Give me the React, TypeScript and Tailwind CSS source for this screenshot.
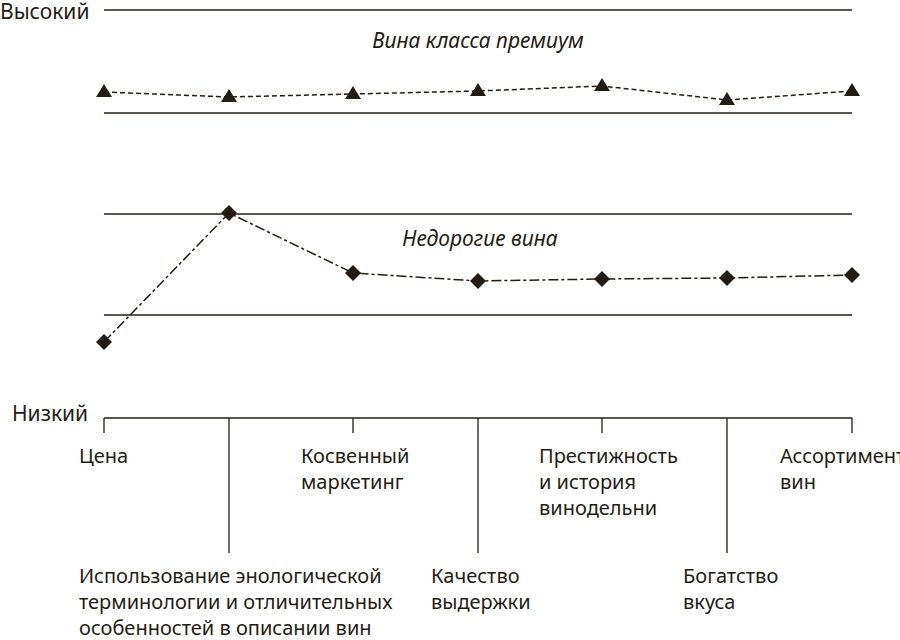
export default function App() {
  const xs = [104, 229, 353, 478, 602, 727, 852];
  const tri = [92, 97, 94, 91, 86, 100, 91];
  const dia = [342, 213, 273, 281, 279, 278, 275];
  const c = "#231c14";
  const lab = (x: number, y: number, lines: string[]) =>
    lines.map((l, i) => (
      <text key={l} x={x} y={y + i * 26} fontSize={20} fill={c}>{l}</text>
    ));
  return (
    <div className="w-[900px] h-[640px] bg-white overflow-hidden font-['Liberation_Sans_Narrow','Roboto_Condensed',sans-serif]">
      <svg width="900" height="640">
        {[10, 113, 214, 315].map((y) => (
          <line key={y} x1={104} x2={852} y1={y} y2={y} stroke={c} strokeWidth={1.3} />
        ))}
        <line x1={104} x2={852} y1={418} y2={418} stroke={c} strokeWidth={1.3} />
        {[104, 353, 602, 852].map((x) => (
          <line key={x} x1={x} x2={x} y1={418} y2={433} stroke={c} strokeWidth={1.3} />
        ))}
        {[229, 478, 727].map((x) => (
          <line key={x} x1={x} x2={x} y1={418} y2={553} stroke={c} strokeWidth={1.3} />
        ))}
        <text x={0} y={19} fontSize={21} fill={c}>Высокий</text>
        <text x={12} y={421} fontSize={21} fill={c}>Низкий</text>
        <text x={478} y={48} fontSize={21} fontStyle="italic" textAnchor="middle" fill={c}>Вина класса премиум</text>
        <text x={480} y={246} fontSize={21} fontStyle="italic" textAnchor="middle" fill={c}>Недорогие вина</text>
        <polyline points={xs.map((x, i) => `${x},${tri[i]}`).join(" ")} fill="none" stroke={c} strokeWidth={1.5} strokeDasharray="5 3" />
        <polyline points={xs.map((x, i) => `${x},${dia[i]}`).join(" ")} fill="none" stroke={c} strokeWidth={1.5} strokeDasharray="10 3 3 3" />
        {xs.map((x, i) => (
          <polygon key={"t" + x} points={`${x},${tri[i] - 8} ${x - 8},${tri[i] + 5} ${x + 8},${tri[i] + 5}`} fill={c} />
        ))}
        {xs.map((x, i) => (
          <polygon key={"d" + x} points={`${x},${dia[i] - 8} ${x + 8},${dia[i]} ${x},${dia[i] + 8} ${x - 8},${dia[i]}`} fill={c} />
        ))}
        {lab(79, 463, ["Цена"])}
        {lab(301, 463, ["Косвенный", "маркетинг"])}
        {lab(539, 463, ["Престижность", "и история", "винодельни"])}
        {lab(780, 463, ["Ассортимент", "вин"])}
        {lab(79, 583, ["Использование энологической", "терминологии и отличительных", "особенностей в описании вин"])}
        {lab(431, 583, ["Качество", "выдержки"])}
        {lab(683, 583, ["Богатство", "вкуса"])}
      </svg>
    </div>
  );
}
